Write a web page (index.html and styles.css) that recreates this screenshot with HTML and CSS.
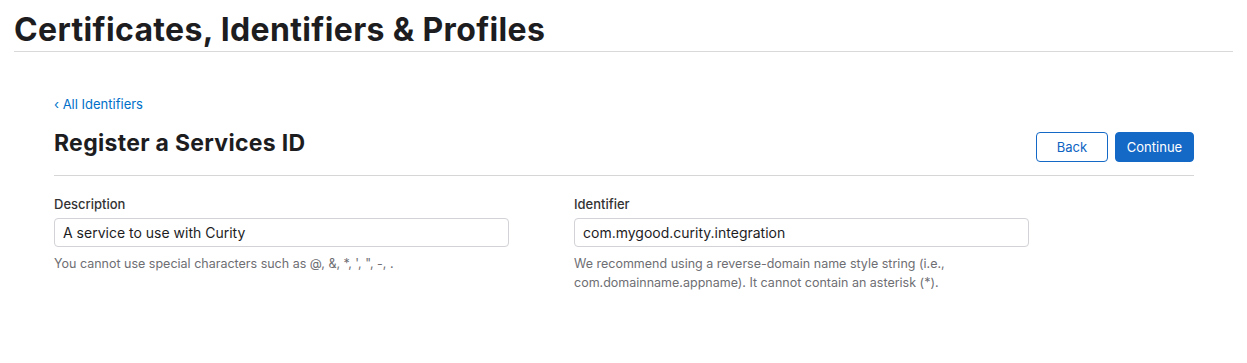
FILE: index.html
```html
<!DOCTYPE html>
<html lang="en">
<head>
    <meta charset="UTF-8">
    <meta name="viewport" content="width=device-width, initial-scale=1.0">
    <title>Register a Services ID</title>
    <link rel="stylesheet" href="styles.css">
</head>
<body>
    <header>
        <h1>Certificates, Identifiers &amp; Profiles</h1>
    </header>
    <main>
        <a class="back-link" href="#">&lsaquo; All Identifiers</a>
        <div class="page-head">
            <h2>Register a Services ID</h2>
            <div class="actions">
                <button type="button" class="btn btn-outline">Back</button>
                <button type="button" class="btn btn-primary">Continue</button>
            </div>
        </div>
        <form class="fields">
            <div class="field">
                <label for="description">Description</label>
                <input type="text" id="description" value="A service to use with Curity">
                <p class="hint">You cannot use special characters such as @, &amp;, *, ', ", -, .</p>
            </div>
            <div class="field">
                <label for="identifier">Identifier</label>
                <input type="text" id="identifier" value="com.mygood.curity.integration">
                <p class="hint">We recommend using a reverse-domain name style string (i.e., com.domainname.appname). It cannot contain an asterisk (*).</p>
            </div>
        </form>
    </main>
</body>
</html>
```
FILE: styles.css
```css
body {
    font-family: Inter, "Liberation Sans", Arial, sans-serif;
    background-color: #fff;
    color: #1d1d1f;
    margin: 0;
    padding: 0;
}

header {
    margin: 0 14px;
    border-bottom: 1px solid #d9d9d9;
}

header h1 {
    margin: 0;
    padding: 12px 0 3px;
    font-size: 32px;
    line-height: 36px;
    font-weight: 700;
    letter-spacing: 0.35px;
}

main {
    width: 1140px;
    margin: 0 0 0 54px;
    padding-top: 41px;
}

.back-link {
    display: inline-block;
    font-size: 13px;
    line-height: 18px;
    color: #0070c9;
    text-decoration: none;
}

.page-head {
    display: flex;
    justify-content: space-between;
    align-items: flex-start;
    border-bottom: 1px solid #d6d6d6;
    margin-top: 12px;
    padding-bottom: 13px;
}

.page-head h2 {
    margin: 0;
    padding-top: 4px;
    font-size: 23px;
    line-height: 28px;
    font-weight: 700;
    letter-spacing: 0.3px;
}

.actions {
    display: flex;
    gap: 7px;
    padding-top: 7px;
}

.btn {
    font-family: inherit;
    font-size: 13px;
    height: 30px;
    border-radius: 4px;
    cursor: pointer;
}

.btn-outline {
    width: 72px;
    background-color: #fff;
    color: #0c63c2;
    border: 1px solid #1468c6;
}

.btn-primary {
    width: 79px;
    background-color: #1468c6;
    color: #fff;
    border: 1px solid #1468c6;
}

.fields {
    display: grid;
    grid-template-columns: 455px 455px;
    column-gap: 65px;
    padding-top: 19px;
}

.field label {
    display: block;
    font-size: 13px;
    line-height: 18px;
    font-weight: 500;
    color: #333;
    margin-bottom: 5px;
}

.field input {
    box-sizing: border-box;
    width: 100%;
    height: 29px;
    padding: 0 8px;
    font-family: inherit;
    font-size: 14px;
    color: #1d1d1f;
    border: 1px solid #d2d2d7;
    border-radius: 4px;
}

.hint {
    margin: 7px 0 0;
    font-size: 12.5px;
    line-height: 19px;
    color: #6e6e73;
}
```
